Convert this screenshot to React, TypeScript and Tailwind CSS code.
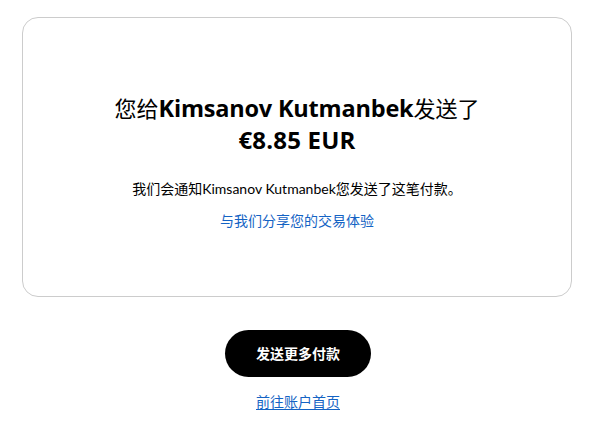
import React from 'react';

const font = { fontFamily: 'Lato, "Noto Sans CJK SC", sans-serif' };
const heading = { fontFamily: '"Open Sans", "Noto Sans CJK SC", sans-serif' };

export default function App() {
  return (
    <div className="min-h-[438px] w-full bg-white pt-[17px] text-black" style={font}>
      <div className="mx-[22px] w-[550px] rounded-[16px] border border-[#cccccc] pt-[74px] pb-[64px] text-center">
        <h1 className="text-[22px] leading-[32px] font-normal" style={heading}>
          您给<span className="text-[23.5px] font-bold tracking-[-0.2px]">Kimsanov Kutmanbek</span>发送了
          <br />
          <span className="text-[24px] font-bold tracking-[0.2px]">€8.85 EUR</span>
        </h1>
        <p className="mt-[23px] text-[14px] leading-[20px]">我们会通知Kimsanov Kutmanbek您发送了这笔付款。</p>
        <a href="#" className="mt-[12px] inline-block text-[14px] leading-[20px] text-[#1463c4]">
          与我们分享您的交易体验
        </a>
      </div>
      <div className="mt-[33px] flex flex-col items-center">
        <button className="h-[47px] w-[146px] rounded-full bg-black text-[14px] font-bold text-white">
          发送更多付款
        </button>
        <a href="#" className="mt-[15px] text-[14px] leading-[20px] text-[#1463c4] underline underline-offset-2">
          前往账户首页
        </a>
      </div>
    </div>
  );
}
